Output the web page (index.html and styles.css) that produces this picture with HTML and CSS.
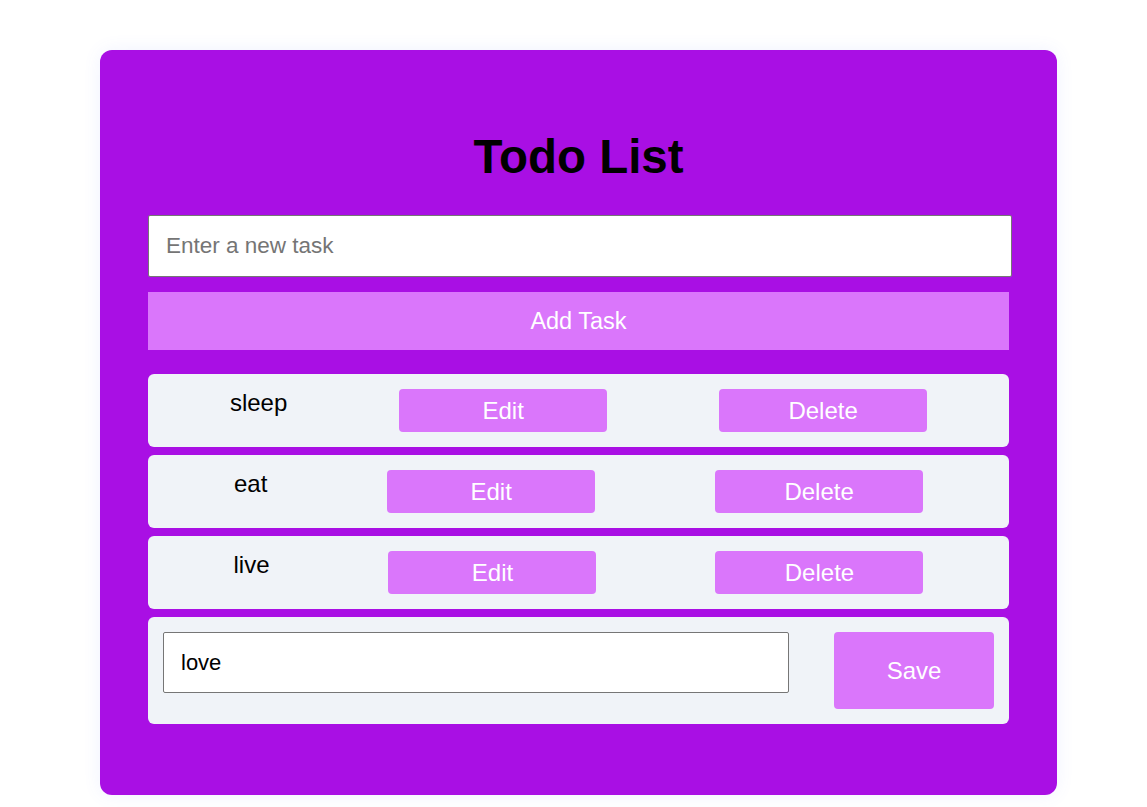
FILE: index.html
```html
<!DOCTYPE html>
<html lang="en">
<head>
<meta charset="utf-8">
<title>Todo List</title>
<link rel="stylesheet" href="styles.css">
</head>
<body>
<main class="card">
  <h1 class="title">Todo List</h1>
  <input class="new-task" type="text" placeholder="Enter a new task">
  <button class="add-btn">Add Task</button>
  <ul class="list">
    <li class="item">
      <span class="item-text">sleep</span>
      <button class="btn">Edit</button>
      <button class="btn">Delete</button>
    </li>
    <li class="item">
      <span class="item-text">eat</span>
      <button class="btn">Edit</button>
      <button class="btn">Delete</button>
    </li>
    <li class="item">
      <span class="item-text">live</span>
      <button class="btn">Edit</button>
      <button class="btn">Delete</button>
    </li>
    <li class="item item-edit">
      <input class="edit-input" type="text" value="love">
      <button class="save-btn">Save</button>
    </li>
  </ul>
</main>
</body>
</html>
```

FILE: styles.css
```css
html, body {
  margin: 0;
  padding: 0;
  background: #ffffff;
  font-family: "Liberation Sans", Arial, sans-serif;
}

.card {
  width: 957px;
  box-sizing: border-box;
  margin: 50px 0 12px 100px;
  padding: 79px 48px 71px;
  background: #a90fe4;
  border-radius: 12px;
  box-shadow: 0 0 18px rgba(90, 110, 255, 0.09);
  display: flex;
  flex-direction: column;
}

.title {
  margin: 0 0 31px;
  font-size: 47.5px;
  line-height: 55px;
  font-weight: bold;
  color: #000;
  text-align: center;
}

.new-task {
  width: 864px;
  height: 62px;
  box-sizing: border-box;
  margin: 0;
  padding: 0 17px;
  border: 1px solid #767676;
  border-radius: 2px;
  font-family: inherit;
  font-size: 22.5px;
  color: #000;
  background: #fff;
}

.new-task::placeholder {
  color: #757575;
}

.add-btn {
  margin-top: 15px;
  height: 58px;
  border: none;
  background: #da76fb;
  color: #fff;
  font-family: inherit;
  font-size: 23.5px;
  padding: 0;
}

.list {
  list-style: none;
  margin: 24px 0 0;
  padding: 0;
  display: flex;
  flex-direction: column;
  gap: 8px;
}

.item {
  display: flex;
  justify-content: space-around;
  align-items: flex-start;
  padding: 15px 26px;
  background: #f0f3f8;
  border-radius: 6px;
}

.item-text {
  font-size: 24px;
  color: #000;
}

.btn {
  width: 208px;
  height: 43px;
  border: none;
  border-radius: 4px;
  background: #da76fb;
  color: #fff;
  font-family: inherit;
  font-size: 24px;
  padding: 0;
}

.item-edit {
  justify-content: space-between;
  padding: 15px;
}

.edit-input {
  width: 626px;
  height: 61px;
  box-sizing: border-box;
  margin: 0;
  padding: 0 17px;
  border: 1px solid #767676;
  border-radius: 2px;
  font-family: inherit;
  font-size: 22px;
  color: #000;
  background: #fff;
}

.save-btn {
  width: 160px;
  height: 77px;
  border: none;
  border-radius: 4px;
  background: #da76fb;
  color: #fff;
  font-family: inherit;
  font-size: 24px;
  padding: 0;
}
```
